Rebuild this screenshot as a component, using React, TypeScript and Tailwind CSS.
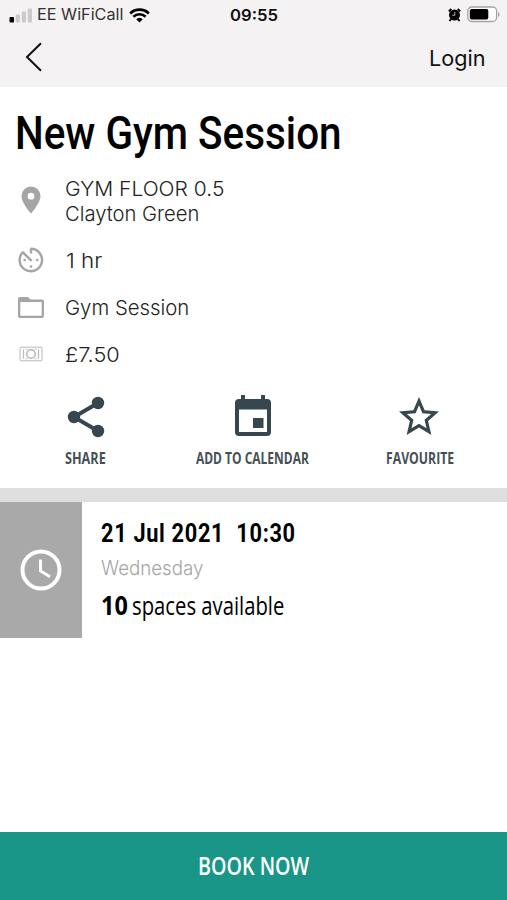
import { useLayoutEffect, useRef, type ReactNode } from 'react';

/** Condenses or widens a single line of text so that it fills its box. */
function FitText({ className, children }: { className: string; children: ReactNode }) {
  const box = useRef<HTMLSpanElement>(null);
  const line = useRef<HTMLSpanElement>(null);

  useLayoutEffect(() => {
    if (box.current && line.current) {
      const ratio = box.current.clientWidth / line.current.offsetWidth;
      line.current.style.transform = `scaleX(${ratio})`;
    }
  }, []);

  return (
    <span ref={box} className={`block shrink-0 ${className}`}>
      <span ref={line} className="inline-block origin-left whitespace-pre align-top">
        {children}
      </span>
    </span>
  );
}

function StatusBar() {
  return (
    <div className="flex h-[30px] items-center pl-[9px] pr-[7px] font-['Inter',sans-serif]">
      <svg className="h-[15px] w-[24px] shrink-0" viewBox="0 0 24 15">
        <rect x="0.5" y="9" width="4.5" height="5.5" rx="1" fill="#000" />
        <rect x="6.7" y="6.5" width="4.2" height="8" rx="1" fill="#cbcacb" />
        <rect x="12.8" y="3.5" width="4.2" height="11" rx="1" fill="#cbcacb" />
        <rect x="18.8" y="0.5" width="4.2" height="14" rx="1" fill="#cbcacb" />
      </svg>
      <FitText className="ml-[4px] w-[86px] text-[15.5px] leading-[30px] text-[#333]">EE WiFiCall</FitText>
      <svg className="ml-[6px] h-[15px] w-[21px] shrink-0" viewBox="0 0 21 15" fill="none" stroke="#000">
        <path d="M1.2 5.4a13.3 13.3 0 0 1 18.6 0" strokeWidth="2.8" />
        <path d="M4.4 8.7a8.8 8.8 0 0 1 12.2 0" strokeWidth="2.6" />
        <path d="M7.2 11.2a4.9 4.9 0 0 1 6.6 0l-3.3 3.4z" fill="#000" stroke="none" />
      </svg>
      <FitText className="ml-[80px] w-[48px] text-[16px] font-semibold leading-[30px] text-[#111]">09:55</FitText>
      <svg className="mb-[1px] ml-auto h-[14px] w-[13px] shrink-0" viewBox="0 0 13 14">
        <circle cx="6.5" cy="7" r="5.5" fill="#000" />
        <path d="M0.8 3.4 3.3 1M12.2 3.4 9.7 1M3 11l-1.5 2M10 11l1.5 2" stroke="#000" strokeWidth="2" />
        <path d="M6.8 4v3.3H4.4" stroke="#ccc" strokeWidth="0.9" fill="none" />
      </svg>
      <svg className="mb-[2px] ml-[6px] h-[17px] w-[33px] shrink-0" viewBox="0 0 33 17">
        <rect x="0.8" y="1" width="28.8" height="14.5" rx="4" fill="#fff" stroke="#a5a4a5" strokeWidth="1.3" />
        <rect x="2.8" y="3" width="18.5" height="10.5" rx="1.8" fill="#000" />
        <path d="M31 6v5c2-1 2-4 0-5z" fill="#a5a4a5" />
      </svg>
    </div>
  );
}

function NavBar() {
  return (
    <div className="flex h-[57px] items-center justify-between pl-[25px] pr-[22px]">
      <svg className="mb-[3px] h-[30px] w-[18px]" viewBox="0 0 18 30" fill="none" stroke="#111" strokeWidth="2">
        <path d="M16 1.3 2 15l14 13.7" />
      </svg>
      <FitText className="w-[56px] font-['Inter',sans-serif] text-[22px] leading-[57px] text-[#111]">Login</FitText>
    </div>
  );
}

function PinIcon() {
  return (
    <svg className="mb-[2px] h-[28px] w-[20px]" viewBox="0 0 20 28" fill="#a5a5a5">
      <path fillRule="evenodd" d="M10 .5A9.5 9.5 0 0 0 .5 10C.5 17 10 27.5 10 27.5S19.500 17 19.500 10A9.500 9.500 0 0 0 10 .5zm0 6.300a3.400 3.400 0 1 1 0 6.800 3.400 3.400 0 0 1 0-6.800z" />
    </svg>
  );
}

function TimerIcon() {
  return (
    <svg className="mb-[1px] h-[32px] w-[32px] shrink-0" viewBox="0 0 28 28" fill="none" stroke="#a5a5a5">
      <path d="M14 8.300V4.200A9.800 9.800 0 1 1 6.800 7.200L14.500 14.800" strokeWidth="2.100" strokeLinejoin="bevel" />
      <g fill="#a5a5a5" stroke="none">
        <circle cx="8.500" cy="14" r="1.100" />
        <circle cx="19.500" cy="14" r="1.100" />
        <circle cx="14" cy="19.700" r="1.100" />
      </g>
    </svg>
  );
}

function FolderIcon() {
  return (
    <svg className="h-[23px] w-[28px]" viewBox="0 0 28 23">
      <path d="M3 1h8l2.500 2.500H25a2 2 0 0 1 2 2V20a2 2 0 0 1-2 2H3a2 2 0 0 1-2-2V3a2 2 0 0 1 2-2z" fill="#a5a5a5" />
      <rect x="3.300" y="6" width="21.400" height="13.700" rx="0.500" fill="#fff" />
    </svg>
  );
}

function CashIcon() {
  return (
    <svg className="h-[16px] w-[24px]" viewBox="0 0 24 16" fill="none" stroke="#b8b8b8">
      <rect x="1" y="1.200" width="22" height="13.600" rx="1" strokeWidth="1" />
      <circle cx="12" cy="8" r="4.300" strokeWidth="1.500" />
      <path d="M4.500 3.500v9M19.500 3.500v9" strokeWidth="1.200" />
      <path d="M6.500 3.300h2M15.500 3.300h2M6.500 12.700h2M15.500 12.700h2" strokeWidth="0.900" />
    </svg>
  );
}

function ShareIcon() {
  return (
    <svg className="h-[42px] w-[38px]" viewBox="0 0 38 42" fill="#37474f">
      <path d="M31 7 7 21l24 14" fill="none" stroke="#37474f" strokeWidth="4" />
      <circle cx="31" cy="7" r="6.200" />
      <circle cx="7" cy="21" r="6.200" />
      <circle cx="31" cy="35" r="6.200" />
    </svg>
  );
}

function CalendarIcon() {
  return (
    <svg className="mb-[2px] h-[42px] w-[38px]" viewBox="0 0 38 42" fill="#37474f">
      <path d="M7 0h4v5H7zM27 0h4v5h-4z" />
      <path fillRule="evenodd" d="M5 4h28a4 4 0 0 1 4 4v29a4 4 0 0 1-4 4H5a4 4 0 0 1-4-4V8a4 4 0 0 1 4-4zm0 10.500v22.500h28V14.500z" />
      <path d="M19 23h10.500v10H19z" />
    </svg>
  );
}

function StarIcon() {
  return (
    <svg className="mb-[1px] mr-[2px] h-[38px] w-[40px]" viewBox="2 2 20 19" fill="#37474f">
      <path d="m22 9.240-7.190-.62L12 2 9.190 8.630 2 9.240l5.460 4.730L5.820 21 12 17.270 18.180 21l-1.630-7.030zM12 15.400l-3.760 2.270 1-4.280-3.320-2.880 4.380-.38L12 6.100l1.710 4.040 4.380.38-3.320 2.880 1 4.280z" />
    </svg>
  );
}

function ClockIcon() {
  return (
    <svg className="h-[42px] w-[42px]" viewBox="0 0 42 42" fill="none" stroke="#fff">
      <circle cx="21" cy="21" r="18.500" strokeWidth="4" />
      <path d="M20.500 10.500V22l9.500 5.700" strokeWidth="3" />
    </svg>
  );
}

function Detail({ icon, className, children }: { icon: ReactNode; className: string; children: ReactNode }) {
  return (
    <div className={`flex items-center ${className}`}>
      <div className="flex w-[61px] shrink-0 justify-center">{icon}</div>
      <div className="pl-[4px] font-['Inter',sans-serif] text-[20.5px] font-light leading-[25px] text-[#222]">{children}</div>
    </div>
  );
}

function Action({ icon, className, children }: { icon: ReactNode; className: string; children: ReactNode }) {
  return (
    <button className="flex w-[167px] flex-col items-center font-['Open_Sans',sans-serif] text-[16px] font-bold leading-[20px] text-[#455056]">
      <span className="flex h-[43px] items-center">{icon}</span>
      <FitText className={`mt-[10px] text-left ${className}`}>{children}</FitText>
    </button>
  );
}

export default function App() {
  return (
    <div className="flex h-[900px] w-[507px] flex-col overflow-hidden bg-white">
      <header className="h-[87px] shrink-0 bg-[#f4f2f3]">
        <StatusBar />
        <NavBar />
      </header>

      <main className="flex-1">
        <h1 className="pl-[15px] pt-[18px] font-['Roboto',sans-serif] text-[47px] font-medium leading-[56px] text-black">
          <FitText className="w-[327px]">New Gym Session</FitText>
        </h1>

        <section className="pt-[15px]">
          <Detail className="h-[50px]" icon={<PinIcon />}>
            <FitText className="w-[159px]">GYM FLOOR 0.5</FitText>
            <FitText className="w-[134px]">Clayton Green</FitText>
          </Detail>
          <Detail className="mt-[21px] h-[26px]" icon={<TimerIcon />}>
            <FitText className="ml-[1px] w-[36px]">1 hr</FitText>
          </Detail>
          <Detail className="mt-[21px] h-[26px]" icon={<FolderIcon />}>
            <FitText className="w-[124px]">Gym Session</FitText>
          </Detail>
          <Detail className="mt-[21px] h-[26px]" icon={<CashIcon />}>
            <FitText className="w-[55px]">£7.50</FitText>
          </Detail>
        </section>

        <section className="flex h-[121px] pl-[2px] pt-[28px]">
          <Action icon={<ShareIcon />} className="w-[41px]">SHARE</Action>
          <Action icon={<CalendarIcon />} className="w-[113px]">ADD TO CALENDAR</Action>
          <Action icon={<StarIcon />} className="w-[68px]">FAVOURITE</Action>
        </section>

        <div className="h-[14px] bg-[#dedede]" />

        <section className="flex h-[136px]">
          <div className="flex w-[82px] items-center justify-center bg-[#a9a9a9]">
            <ClockIcon />
          </div>
          <div className="pl-[19px] pt-[14px] text-black">
            <FitText className="w-[195px] font-['Roboto',sans-serif] text-[26px] font-bold leading-[34px] tracking-[0.8px]">{'21 Jul 2021  10:30'}</FitText>
            <FitText className="mt-[5px] w-[102px] font-['Inter',sans-serif] text-[20px] font-light leading-[26px] text-[#a5a5a5]">Wednesday</FitText>
            <div className="mt-[7px] flex font-['Open_Sans',sans-serif] text-[26px] leading-[34px]">
              <FitText className="w-[27px] font-bold">10</FitText>
              <FitText className="ml-[4px] w-[152px]">spaces available</FitText>
            </div>
          </div>
        </section>
      </main>

      <button className="flex h-[68px] shrink-0 items-center justify-center bg-[#1a9688] pb-[2px] font-['Open_Sans',sans-serif] text-[25px] font-semibold leading-[34px] text-white">
        <FitText className="w-[111px] text-left">BOOK NOW</FitText>
      </button>
    </div>
  );
}
